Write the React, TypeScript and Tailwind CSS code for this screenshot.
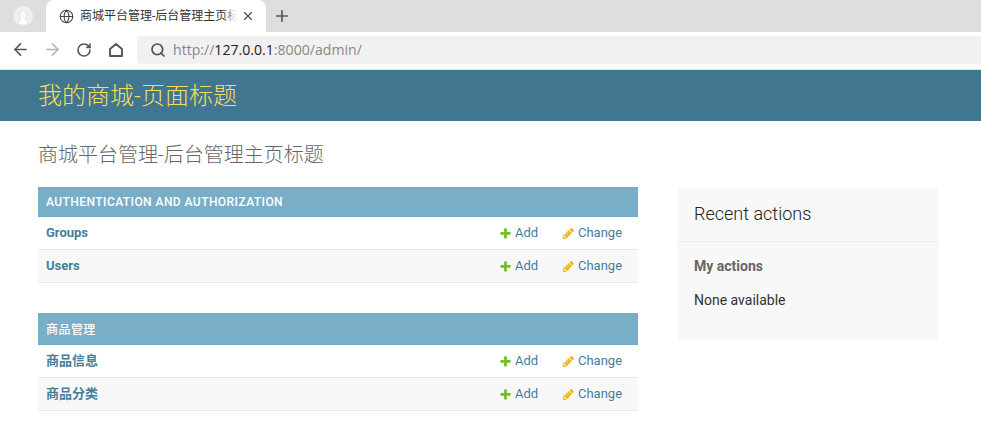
import { ArrowLeft, ArrowRight, Globe, Plus, RotateCw, Search, X } from "lucide-react";

const font = { fontFamily: '"Roboto", "Noto Sans CJK SC", sans-serif' };

function AddIcon() {
  return (
    <svg width="13" height="13" viewBox="0 0 1792 1792" className="shrink-0">
      <path fill="#70bf2b" d="M1600 796v192q0 40-28 68t-68 28h-416v416q0 40-28 68t-68 28h-192q-40 0-68-28t-28-68v-416h-416q-40 0-68-28t-28-68v-192q0-40 28-68t68-28h416v-416q0-40 28-68t68-28h192q40 0 68 28t28 68v416h416q40 0 68 28t28 68z" />
    </svg>
  );
}

function ChangeIcon() {
  return (
    <svg width="13" height="13" viewBox="0 0 1792 1792" className="shrink-0">
      <path fill="#efb80b" d="M491 1536l91-91-235-235-91 91v107h128v128h107zm523-928q0-22-22-22-10 0-17 7l-542 542q-7 7-7 17 0 22 22 22 10 0 17-7l542-542q7-7 7-17zm-54-192l416 416-832 832h-416v-416zm683 96q0 53-37 90l-166 166-416-416 166-165q36-38 90-38 53 0 91 38l235 234q37 39 37 91z" />
    </svg>
  );
}

function Row({ name, alt }: { name: string; alt?: boolean }) {
  return (
    <div className={`flex items-center h-[33px] border-b border-[#e8e8e8] pl-2 text-[13px] ${alt ? "bg-[#f8f8f8]" : "bg-white"}`}>
      <span className="font-bold text-[#447e9b] flex-1">{name}</span>
      <span className="flex items-center gap-[3px] text-[#447e9b] w-[63px]"><AddIcon /> Add</span>
      <span className="flex items-center gap-[3px] text-[#447e9b] w-[76px]"><ChangeIcon /> Change</span>
    </div>
  );
}

function Module({ title, rows, tall }: { title: string; rows: string[]; tall?: boolean }) {
  return (
    <div>
      <div className={`flex items-center px-2 bg-[#79aec8] text-white text-[12px] font-medium tracking-[0.44px] ${tall ? "h-8 pt-[1px]" : "h-[30px]"}`}>{title}</div>
      {rows.map((r, i) => <Row key={r} name={r} alt={i === 1} />)}
    </div>
  );
}

export default function App() {
  return (
    <div className="w-[981px] h-[443px] overflow-hidden bg-white" style={font}>
      {/* browser tabs */}
      <div className="flex h-8 bg-[#dedede]">
        <div className="w-[46px] flex items-center justify-center">
          <svg width="22" height="22" viewBox="0 0 22 22">
            <circle cx="11" cy="11" r="10" fill="#efefef" />
            <path d="M6 20c0-4 2-5 3-6-2-2-2-8 2-9 4 0 4 7 2 9 1 1 3 2 3 6z" fill="#fbfbfb" stroke="#dcdcdc" strokeWidth="0.8" />
          </svg>
        </div>
        <div className="relative w-[220px] bg-white rounded-t-lg flex items-center pl-[13px] pr-[11px]">
          <Globe size={15} strokeWidth={1.7} className="text-[#444] shrink-0" />
          <span className="ml-[6px] text-[12px] text-[#333] w-[157px] overflow-hidden whitespace-nowrap">商城平台管理-后台管理主页标题</span>
          <div className="absolute left-[177px] top-2 w-[14px] h-4 bg-gradient-to-r from-transparent to-white" />
          <X size={14} strokeWidth={2.2} className="text-[#555] ml-[5px]" />
        </div>
        <div className="ml-[7px] flex items-center">
          <Plus size={18} strokeWidth={2.2} className="text-[#555]" />
        </div>
      </div>
      {/* toolbar */}
      <div className="flex items-center h-[38px] bg-white border-b border-[#e4e4e4] pl-[11px] pb-[2px]">
        <ArrowLeft size={19} strokeWidth={2.1} className="text-[#555]" />
        <ArrowRight size={19} strokeWidth={2.1} className="text-[#b5b5b5] ml-[13px]" />
        <RotateCw size={16} strokeWidth={2.4} className="text-[#555] ml-[14px]" />
        <svg width="16" height="16" viewBox="0 0 16 16" className="ml-4">
          <path d="M2 14V7l6-5 6 5v7z" fill="none" stroke="#555" strokeWidth="1.9" strokeLinejoin="round" />
        </svg>
        <div className="ml-[13px] flex-1 h-7 bg-[#f1f1f1] rounded-l flex items-center pl-[13px]">
          <Search size={16} strokeWidth={2.6} className="text-[#555]" />
          <span className="ml-[7px] text-[14.1px] text-[#888]" style={{ fontFamily: '"Open Sans", sans-serif' }}>
            http://<span className="text-[#222]">127.0.0.1</span>:8000/admin/
          </span>
        </div>
      </div>
      {/* site header */}
      <div className="flex items-center h-[51px] bg-[#417690] px-[38px] text-[24px] font-light text-[#f5dd5d]">我的商城-页面标题</div>
      <div className="px-[38px] pt-[21px]">
        <h1 className="text-[20px] font-light text-[#666] leading-[26px]">商城平台管理-后台管理主页标题</h1>
        <div className="flex gap-10 mt-[19px]">
          <div className="w-[600px] flex flex-col gap-[30px]">
            <Module title="AUTHENTICATION AND AUTHORIZATION" rows={["Groups", "Users"]} />
            <Module title="商品管理" rows={["商品信息", "商品分类"]} tall />
          </div>
          <div className="w-[260px] h-[153px] bg-[#f8f8f8] text-[14px]">
            <div className="h-[55px] border-b border-[#eaeaea] flex items-center px-4 pb-[2px] text-[18px] font-light text-[#222]">Recent actions</div>
            <div className="px-4 pt-4">
              <div className="font-bold text-[#666] leading-4">My actions</div>
              <div className="mt-[18px] text-[#333] leading-4">None available</div>
            </div>
          </div>
        </div>
      </div>
    </div>
  );
}
